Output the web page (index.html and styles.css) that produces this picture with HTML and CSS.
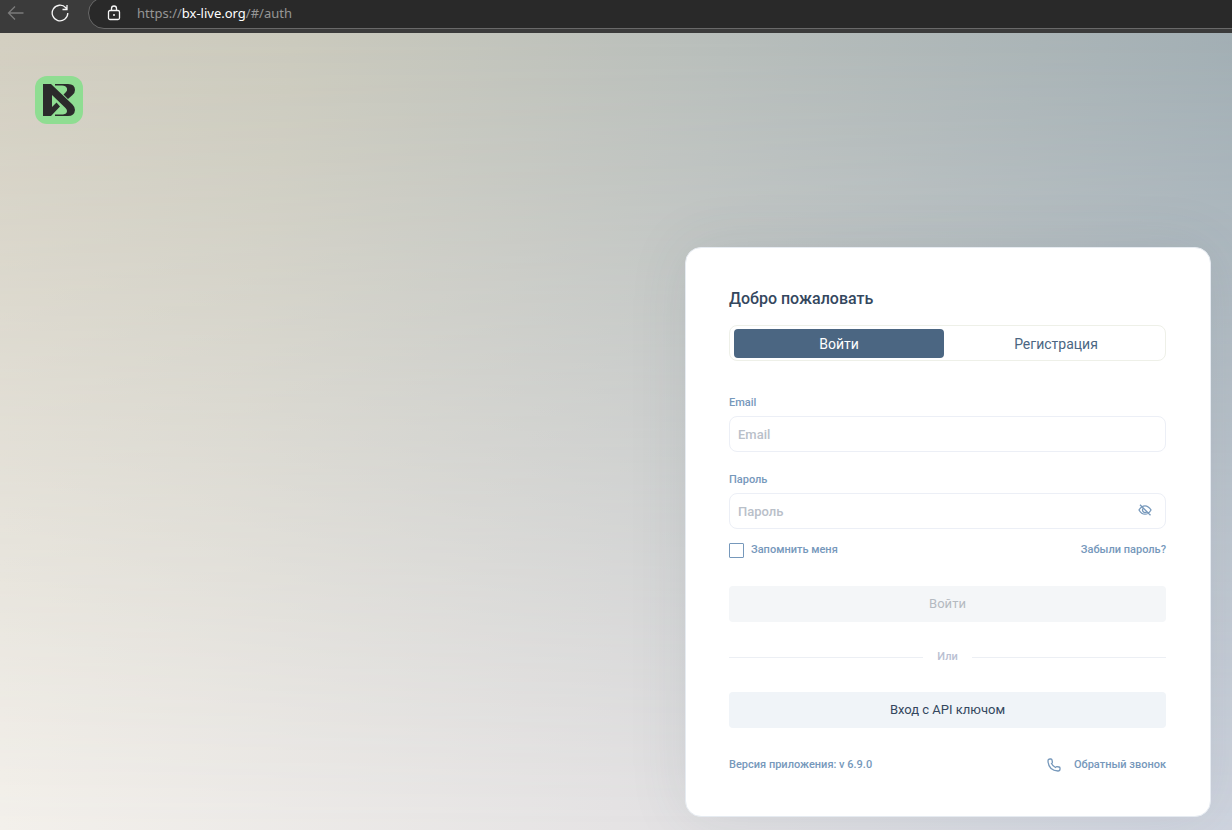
FILE: index.html
```html
<!DOCTYPE html>
<html lang="ru">
<head>
<meta charset="utf-8">
<meta name="viewport" content="width=device-width, initial-scale=1">
<title>BX Live</title>
<link rel="stylesheet" href="styles.css">
</head>
<body>
<header class="browser">
  <button class="browser-button back" type="button" aria-label="Назад">
    <svg width="18" height="16" viewBox="0 0 18 16"><path d="M16.500 8H1.500M8 1.500L1.500 8L8 14.500"/></svg>
  </button>
  <button class="browser-button reload" type="button" aria-label="Обновить">
    <svg width="18" height="18" viewBox="0 0 18 18"><path d="M16.800 9A7.800 7.800 0 1 1 14.800 3.800L16 5.200M16 1V5.500H11.500"/></svg>
  </button>
  <div class="address">
    <svg class="lock" width="14" height="16" viewBox="0 0 14 16"><rect x="1.500" y="5.500" width="11" height="9" rx="1.500"/><path d="M4.500 5.500V3.500a2.500 2.500 0 0 1 5 0V5.500"/><circle cx="7" cy="10" r=".4"/></svg>
    <span class="url">https://<b>bx-live.org</b>/#/auth</span>
  </div>
</header>
<main class="page">
  <a class="logo" href="#" aria-label="BX Live">
    <svg width="48" height="48" viewBox="0 0 48 48"><rect width="48" height="48" rx="12" fill="#8fdd92"/><path fill="#2b2b2b" d="M8 8H16L37.500 28.500Q40 31 40 34Q39.500 40 33 40H20V38.500H28Q32 38 32 35Q32 33.500 30.500 32L17 19V31L21.500 26.500L25 30.500L16 40H8ZM20 8H33Q40 8 40 14Q40 17 37.500 19L33 23L28.500 18.500L31 16Q32.500 14.500 32 12.500Q31 9.500 27 9.500H20Z"/></svg>
  </a>
  <section class="card">
    <h1 class="title">Добро пожаловать</h1>
    <div class="tabs">
      <button class="tab active" type="button">Войти</button>
      <button class="tab" type="button">Регистрация</button>
    </div>
    <form class="form">
      <div class="field">
        <label class="label" for="email">Email</label>
        <div class="control"><input class="input" id="email" type="email" placeholder="Email"></div>
      </div>
      <div class="field">
        <label class="label" for="password">Пароль</label>
        <div class="control">
          <input class="input" id="password" type="password" placeholder="Пароль">
          <button class="reveal" type="button" aria-label="Показать пароль">
            <svg width="14" height="12" viewBox="0 0 14 12"><path d="M1 6Q3.500 1.800 7 1.800T13 6Q10.500 10.200 7 10.200T1 6ZM5.200 4.200A2.400 2.400 0 1 0 8.800 7.700M2 .8L12.500 11.300"/></svg>
          </button>
        </div>
      </div>
      <div class="options">
        <label class="remember"><input class="check" type="checkbox">Запомнить меня</label>
        <a class="link" href="#">Забыли пароль?</a>
      </div>
      <button class="action" type="submit" disabled>Войти</button>
      <div class="divider">Или</div>
      <button class="action api" type="button">Вход с API ключом</button>
    </form>
    <footer class="footer">
      <span>Версия приложения: v 6.9.0</span>
      <a class="link call" href="#">
        <svg width="14" height="14" viewBox="0 0 14 14"><path d="M1 3Q1 1 3 1H4Q4.800 1 5 2L5.400 4Q5.500 4.800 4.500 5.500Q5.800 8.200 8.500 9.500Q9.200 8.500 10 8.600L12 9Q13 9.200 13 10V11Q13 13 11 13Q1.500 12.500 1 3Z"/></svg>
        Обратный звонок
      </a>
    </footer>
  </section>
</main>
</body>
</html>
```
FILE: styles.css
```css
* { box-sizing: border-box; }

body {
  margin: 0;
  min-height: 100vh;
  display: flex;
  flex-direction: column;
  font-family: Roboto, "Liberation Sans", sans-serif;
  font-size: 11px;
  font-weight: 500;
  line-height: 16px;
  color: #7698bb;
}

button, input { font: inherit; margin: 0; }
button { border: 0; padding: 0; background: none; color: inherit; }
svg { display: block; flex: none; }
a { color: inherit; text-decoration: none; }

.browser {
  display: flex;
  align-items: flex-start;
  height: 33px;
  padding-left: 7px;
  background: #3b3b3b;
  overflow: hidden;
}
.browser-button {
  height: 26px;
  display: flex;
  align-items: center;
}
.browser-button svg, .lock { fill: none; stroke: #f5f5f5; stroke-width: 1.3; }
.browser-button.back svg { stroke: #7b7b7b; }
.reload { margin-left: 26px; }
.address {
  flex: 1;
  display: flex;
  align-items: center;
  gap: 16px;
  height: 32px;
  margin: -3px -2px 0 19px;
  padding-left: 18px;
  border: 1px solid #696969;
  border-radius: 16px 0 0 16px;
  background: #292929;
}
.url {
  font-family: "Noto Sans", "Open Sans", sans-serif;
  font-size: 13px;
  font-weight: 400;
  color: #969696;
}
.url b { font-weight: 400; color: #fff; }

.page {
  flex: 1;
  position: relative;
  z-index: 0;
  display: flex;
  justify-content: space-between;
  align-items: flex-start;
  padding: 43px 21px 13px 35px;
  background: linear-gradient(98deg, #d3cfc1 0%, #cbcabd 22%, #b8bebb 54%, #9eacb3 100%);
}
.page::before {
  content: "";
  position: absolute;
  inset: 0;
  z-index: -1;
  background: linear-gradient(90deg, #f3f0eb 0%, #e5e3e4 50%, #cfd4df 100%);
  -webkit-mask-image: linear-gradient(to bottom, transparent, #000);
  mask-image: linear-gradient(to bottom, transparent, #000);
}

.card {
  flex: 0 1 526px;
  margin-top: 171px;
  padding: 41px 44px 43px 43px;
  border: 1px solid #e6ebf1;
  border-radius: 16px;
  background: #fff;
  box-shadow: 0 0 60px rgba(60, 75, 90, .1);
}
.title {
  margin: 0 0 16px;
  font-size: 16px;
  font-weight: 500;
  line-height: 20px;
  color: #34475e;
}
.tabs {
  display: grid;
  grid-template-columns: 1fr 1fr;
  gap: 7px;
  height: 36px;
  margin-bottom: 34px;
  padding: 3px 4px 2px;
  border: 1px solid #eef0e8;
  border-radius: 8px;
}
.tab {
  border-radius: 4px;
  font-size: 14px;
  font-weight: 400;
  color: #4b6682;
}
.tab.active { background: #4b6682; color: #fff; }

.field { margin-bottom: 20px; }
.label { display: block; margin-bottom: 5px; }
.control { position: relative; }
.input {
  display: block;
  width: 100%;
  height: 36px;
  padding: 0 40px 0 8px;
  border: 1px solid #eceff6;
  border-radius: 8px;
  background: #fff;
  font-size: 13px;
  color: #34475e;
}
.input::placeholder { color: #b9c0c9; opacity: 1; }
.reveal { position: absolute; right: 14px; top: 11px; }
.reveal svg, .call svg { fill: none; stroke: #7698bb; stroke-width: 1.3; }
.options {
  display: flex;
  justify-content: space-between;
  margin: -7px 0 28px;
}
.remember { display: flex; gap: 7px; }
.check {
  appearance: none;
  width: 15px;
  height: 15px;
  margin: 1px 0 0;
  border: 1px solid #7698bb;
  border-radius: 1px;
}
.action {
  display: block;
  width: 100%;
  height: 36px;
  border-radius: 4px;
  background: #f4f6f8;
  font-size: 13px;
  font-weight: 400;
  color: #b4bac1;
}
.action.api { background: #f0f4f8; color: #34475e; }
.divider {
  display: flex;
  align-items: center;
  gap: 14px;
  margin: 27px 0;
  color: #b9c0d2;
}
.divider::before, .divider::after {
  content: "";
  flex: 1;
  height: 1px;
  background: #eceff4;
}
.footer {
  display: flex;
  justify-content: space-between;
  margin-top: 29px;
}
.call { display: flex; align-items: center; gap: 13px; }
```
